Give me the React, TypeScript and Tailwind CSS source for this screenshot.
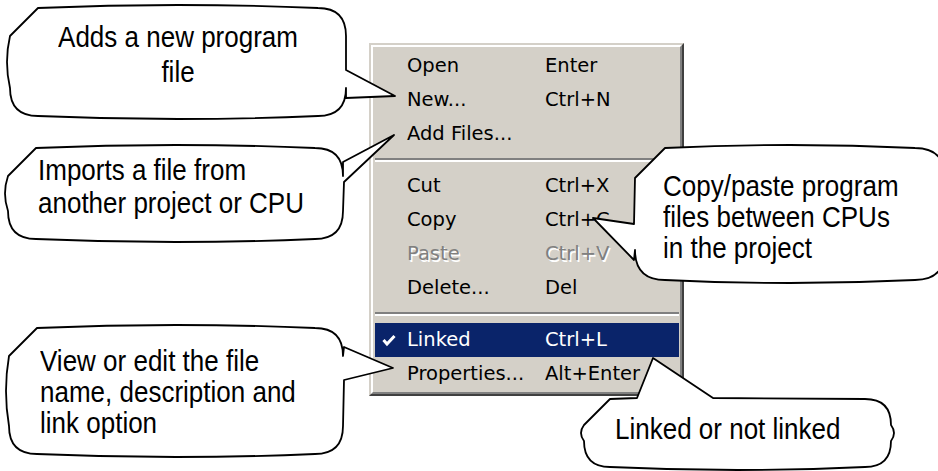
type Pt = [number, number];
type Side = 'top' | 'right' | 'bottom' | 'left';

function bubblePath(x1: number, y1: number, x2: number, y2: number, r: number, b: number, side: Side, pts: Pt[]) {
  const d: string[] = [`M ${x1 + r} ${y1}`];
  const edge = (s: Side, to: Pt, ctrl: Pt) => {
    if (s === side) {
      pts.forEach((p) => d.push(`L ${p[0]} ${p[1]}`));
      d.push(`L ${to[0]} ${to[1]}`);
    } else {
      d.push(`Q ${ctrl[0]} ${ctrl[1]} ${to[0]} ${to[1]}`);
    }
  };
  const mx = (x1 + x2) / 2;
  const my = (y1 + y2) / 2;
  edge('top', [x2 - r, y1], [mx, y1 - b]);
  d.push(`Q ${x2} ${y1} ${x2} ${y1 + r}`);
  edge('right', [x2, y2 - r], [x2 + b, my]);
  d.push(`Q ${x2} ${y2} ${x2 - r} ${y2}`);
  edge('bottom', [x1 + r, y2], [mx, y2 + b]);
  d.push(`Q ${x1} ${y2} ${x1} ${y2 - r}`);
  edge('left', [x1, y1 + r], [x1 - b, my]);
  d.push('Z');
  return d.join(' ');
}

const bubbles = [
  bubblePath(10, 8, 346, 116, 28, 6, 'right', [[346, 70], [395, 96], [346, 98]]),
  bubblePath(8, 148, 343, 239, 28, 6, 'right', [[343, 162], [394, 135], [344, 182]]),
  bubblePath(635, 148, 945, 280, 30, 6, 'left', [[634, 260], [593, 218], [634, 224]]),
  bubblePath(9, 328, 343, 454, 28, 6, 'right', [[344, 347], [393, 368], [344, 380]]),
  bubblePath(584, 399, 891, 467, 26, 6, 'top', [[637, 398], [653, 358], [713, 398]]),
];

type Item = { label: string; keys?: string; disabled?: boolean; active?: boolean; checked?: boolean } | 'sep';

const items: Item[] = [
  { label: 'Open', keys: 'Enter' },
  { label: 'New...', keys: 'Ctrl+N' },
  { label: 'Add Files...' },
  'sep',
  { label: 'Cut', keys: 'Ctrl+X' },
  { label: 'Copy', keys: 'Ctrl+C' },
  { label: 'Paste', keys: 'Ctrl+V', disabled: true },
  { label: 'Delete...', keys: 'Del' },
  'sep',
  { label: 'Linked', keys: 'Ctrl+L', active: true, checked: true },
  { label: 'Properties...', keys: 'Alt+Enter' },
];

function ContextMenu() {
  return (
    <div className="absolute left-[369px] top-[43px] w-[315px] border-2 border-t-[#d4d0c8] border-l-[#d4d0c8] border-r-[#404040] border-b-[#404040]">
      <div className="border-2 border-t-white border-l-white border-r-[#808080] border-b-[#808080] bg-[#d4d0c8] pl-[2px] pr-px pt-[2px] pb-px font-['DejaVu_Sans',sans-serif] text-[19.5px]">
        {items.map((it, i) =>
          it === 'sep' ? (
            <div key={i} className="py-[7px]">
              <div className="h-[2px] bg-[#808080]" />
              <div className="h-[2px] bg-white" />
            </div>
          ) : (
            <div
              key={i}
              className={
                'flex h-[34px] items-center ' +
                (it.active ? 'bg-[#0a246a] text-white' : it.disabled ? 'text-[#808080] [text-shadow:1.5px_1.5px_0_#fff]' : 'text-black')
              }
            >
              <div className="flex w-[32px] items-center pl-[7px]">
                {it.checked && (
                  <svg width="14" height="13" viewBox="0 0 14 13">
                    <polyline points="1.5,6 5,10 12.5,2" fill="none" stroke="#fff" strokeWidth="3" />
                  </svg>
                )}
              </div>
              <span className="w-[138px] whitespace-nowrap">{it.label}</span>
              <span className="whitespace-nowrap">{it.keys}</span>
            </div>
          ),
        )}
      </div>
    </div>
  );
}

export default function App() {
  return (
    <div className="relative h-[471px] w-[938px] overflow-hidden bg-white font-['Liberation_Sans',Arial,sans-serif] text-[26px] text-black">
      <ContextMenu />
      <svg className="absolute inset-0" width="938" height="471" viewBox="0 0 938 471">
        {bubbles.map((d, i) => (
          <path key={i} d={d} fill="#fff" stroke="#000" strokeWidth="1.8" strokeLinejoin="round" />
        ))}
      </svg>
      <div className="absolute left-[10px] top-[20px] w-[336px] origin-top-left scale-y-[1.12] text-center leading-[31.25px]">
        Adds a new program
        <br />
        file
      </div>
      <div className="absolute left-[38px] top-[154px] origin-top-left scale-y-[1.12] leading-[29.5px]">
        Imports a file from
        <br />
        another project or CPU
      </div>
      <div className="absolute left-[663px] top-[170px] origin-top-left scale-y-[1.12] leading-[28.1px]">
        Copy/paste program
        <br />
        files between CPUs
        <br />
        in the project
      </div>
      <div className="absolute left-[40px] top-[345px] origin-top-left scale-y-[1.12] leading-[28.1px]">
        View or edit the file
        <br />
        name, description and
        <br />
        link option
      </div>
      <div className="absolute left-[615px] top-[413px] origin-top-left scale-y-[1.12] leading-[28.1px]">Linked or not linked</div>
    </div>
  );
}
